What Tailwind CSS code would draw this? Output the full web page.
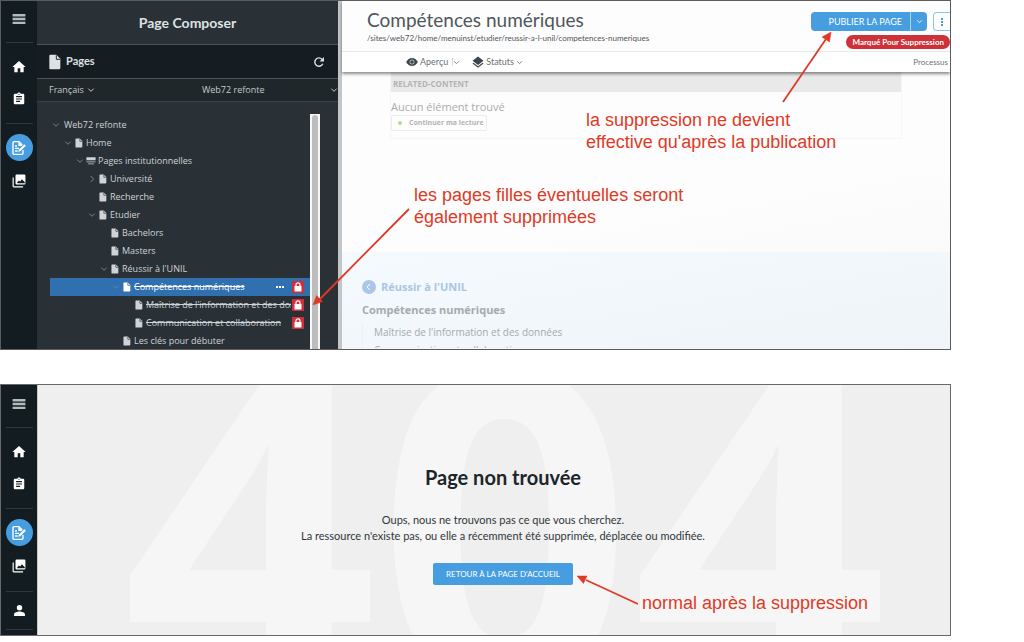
<!DOCTYPE html>
<html lang="fr">
<head>
    <meta charset="UTF-8">
    <meta name="viewport" content="width=device-width, initial-scale=1.0">
    <title>Page Composer</title>
    <script src="https://cdn.jsdelivr.net/npm/@tailwindcss/browser@4"></script>
</head>
<body class="bg-white font-['Lato',sans-serif]">
    <!-- Icons -->
    <svg class="hidden">
        <symbol id="menu" viewBox="0 0 24 24"><path d="M1 3.500h22v4H1zM1 10h22v4H1zM1 16.500h22v4H1z"/></symbol>
        <symbol id="home" viewBox="0 0 24 24"><path d="M10 20v-6h4v6h5v-8h3L12 3 2 12h3v8z"/></symbol>
        <symbol id="clipboard" viewBox="0 0 24 24"><path d="M19 3h-4.180C14.400 1.840 13.300 1 12 1s-2.400.84-2.820 2H5a2 2 0 0 0-2 2v14a2 2 0 0 0 2 2h14a2 2 0 0 0 2-2V5a2 2 0 0 0-2-2zm-7 0a1 1 0 1 1 0 2 1 1 0 0 1 0-2zm2 14H7v-2h7zm3-4H7v-2h10zm0-4H7V7h10z"/></symbol>
        <symbol id="compose" viewBox="0 0 24 24"><path d="M18 15v5a1.500 1.500 0 0 1-1.500 1.500h-12A1.500 1.500 0 0 1 3 20V4a1.500 1.500 0 0 1 1.500-1.500H12L17 7.500" fill="none" stroke="currentColor" stroke-width="2"/><path d="M11 3v6h6zM6 8h3v2H6zM6 11.500h6v2H6zM6 15.500h4v2H6zM11 17.500l.6-3 8.400-8 2.300 2.300-8.300 8.100z"/></symbol>
        <symbol id="images" viewBox="0 0 24 24"><path d="M23 16V3a2 2 0 0 0-2-2H8a2 2 0 0 0-2 2v13a2 2 0 0 0 2 2h13a2 2 0 0 0 2-2zm-14 0v-2l3-3 2 2 3-4 5 5v2zM1 6v15a2 2 0 0 0 2 2h16v-2H3V6z"/></symbol>
        <symbol id="user" viewBox="0 0 24 24"><path d="M12 12a5 5 0 1 0 0-10 5 5 0 0 0 0 10zm0 2c-3.500 0-10 1.700-10 5v3h20v-3c0-3.300-6.500-5-10-5z"/></symbol>
        <symbol id="page" viewBox="0 0 18 24"><path d="M2 1h9l6 6v14a2 2 0 0 1-2 2H2a1.500 1.500 0 0 1-1.500-1.500v-19A1.500 1.500 0 0 1 2 1z"/><path d="M11 2v6h5.500" fill="none" stroke="#293136" stroke-width="1.500"/></symbol>
        <symbol id="section" viewBox="0 0 24 24"><path d="M1 3h22v7H1zM1 13h22v2H1zM5 18h14v2H5z"/></symbol>
        <symbol id="down" viewBox="0 0 12 12"><path d="M2 4l4 4 4-4" fill="none" stroke="currentColor" stroke-width="1.500"/></symbol>
        <symbol id="right" viewBox="0 0 12 12"><path d="M4 1.500L8.500 6 4 10.500" fill="none" stroke="currentColor" stroke-width="1.500"/></symbol>
        <symbol id="lock" viewBox="0 0 12 12"><path d="M2.500 5h7v5.500h-7z"/><path d="M4 5V3.800a2 2 0 0 1 4 0V5" fill="none" stroke="currentColor" stroke-width="1.200"/></symbol>
        <symbol id="reload" viewBox="0 0 24 24"><path d="M19.500 15.500A8.300 8.300 0 1 1 18 6.500" fill="none" stroke="currentColor" stroke-width="2.800"/><path d="M22 2v9h-9z"/></symbol>
        <symbol id="eye" viewBox="0 0 24 24"><path d="M12 4.500C7 4.500 2.700 7.600 1 12c1.700 4.400 6 7.500 11 7.500s9.300-3.100 11-7.500c-1.700-4.400-6-7.500-11-7.500zM12 17a5 5 0 1 1 0-10 5 5 0 0 1 0 10zm0-8a3 3 0 1 0 0 6 3 3 0 0 0 0-6z" stroke="currentColor"/></symbol>
        <symbol id="layers" viewBox="0 0 24 24"><path d="M12 1L1 9.500 12 18l11-8.500zM12 20.500L3 13.500l-2 1.600L12 23.700l11-8.600-2-1.600z"/></symbol>
    </svg>

    <main class="relative flex flex-col gap-[34px] pr-[73px]">
        <!-- Page Composer -->
        <section class="relative flex overflow-hidden border border-[#5c5c5e]">
            <nav class="flex w-9 shrink-0 flex-col items-center bg-[#131c21] text-white">
                <button aria-label="Menu" class="flex h-9 w-full items-center justify-center text-[#b5babd]"><svg class="size-[14px] fill-current"><use href="#menu"/></svg></button>
                <hr class="mt-[5px] w-[27px] border-[#2f383d]">
                <button aria-label="Accueil" class="mt-2 flex h-8 w-full items-center justify-center"><svg class="size-4 fill-current"><use href="#home"/></svg></button>
                <button aria-label="Contenus" class="flex h-8 w-full items-center justify-center"><svg class="size-[14px] fill-current"><use href="#clipboard"/></svg></button>
                <hr class="mt-2 w-[27px] border-[#2f383d]">
                <button aria-label="Page Composer" class="mt-[10px] flex size-[27px] items-center justify-center rounded-full bg-[#469ee0]"><svg class="size-4 fill-current"><use href="#compose"/></svg></button>
                <button aria-label="Médias" class="mt-1 flex h-8 w-full items-center justify-center"><svg class="size-[14px] fill-current"><use href="#images"/></svg></button>
            </nav>

            <aside class="w-[301px] shrink-0 bg-[#293136] text-[#dfe1e2]">
                <h1 class="flex h-11 items-center justify-center border-b border-[#4c5458] text-[14px] font-bold">Page Composer</h1>
                <div class="flex h-[34px] items-center border-b border-[#4c5458] bg-[#151c22] pr-[13px] pl-3">
                    <svg class="h-4 w-3 fill-current"><use href="#page"/></svg>
                    <h2 class="ml-[5px] flex-1 text-[11px] font-bold">Pages</h2>
                    <button aria-label="Actualiser"><svg class="size-3 fill-current"><use href="#reload"/></svg></button>
                </div>
                <div class="flex h-[23px] items-center border-b border-[#394146] bg-[#1f272b] pl-3 font-['Open_Sans',sans-serif] text-[9px] text-[#c6c9cb]">
                    <select aria-label="Langue" class="w-[38px] appearance-none"><option>Français</option></select>
                    <svg class="size-2"><use href="#down"/></svg>
                    <select aria-label="Site" class="ml-[107px] flex-1 appearance-none"><option>Web72 refonte</option></select>
                    <svg class="size-2"><use href="#down"/></svg>
                </div>
                <div class="flex pt-3 pl-[13px]">
                    <ul class="mt-[2px] w-[260px] fill-current font-['Open_Sans',sans-serif] text-[9px] leading-[18px] whitespace-nowrap text-[#d0d3d5]">
                        <li class="flex h-[18px] items-center"><svg class="mr-[2px] size-3 p-[2px] text-[#7d8488]"><use href="#down"/></svg><a href="#">Web72 refonte</a></li>
                        <li class="flex h-[18px] items-center pl-3"><svg class="size-3 p-[2px] text-[#7d8488]"><use href="#down"/></svg><svg class="mr-[2px] h-[10px] w-[10px]"><use href="#page"/></svg><a href="#">Home</a></li>
                        <li class="flex h-[18px] items-center pl-6"><svg class="size-3 p-[2px] text-[#7d8488]"><use href="#down"/></svg><svg class="mr-[2px] h-[10px] w-[10px]"><use href="#section"/></svg><a href="#">Pages institutionnelles</a></li>
                        <li class="flex h-[18px] items-center pl-9"><svg class="size-3 p-[2px] text-[#7d8488]"><use href="#right"/></svg><svg class="mr-[2px] h-[10px] w-[10px]"><use href="#page"/></svg><a href="#">Université</a></li>
                        <li class="flex h-[18px] items-center pl-12"><svg class="mr-[2px] h-[10px] w-[10px]"><use href="#page"/></svg><a href="#">Recherche</a></li>
                        <li class="flex h-[18px] items-center pl-9"><svg class="size-3 p-[2px] text-[#7d8488]"><use href="#down"/></svg><svg class="mr-[2px] h-[10px] w-[10px]"><use href="#page"/></svg><a href="#">Etudier</a></li>
                        <li class="flex h-[18px] items-center pl-15"><svg class="mr-[2px] h-[10px] w-[10px]"><use href="#page"/></svg><a href="#">Bachelors</a></li>
                        <li class="flex h-[18px] items-center pl-15"><svg class="mr-[2px] h-[10px] w-[10px]"><use href="#page"/></svg><a href="#">Masters</a></li>
                        <li class="flex h-[18px] items-center pl-12"><svg class="size-3 p-[2px] text-[#7d8488]"><use href="#down"/></svg><svg class="mr-[2px] h-[10px] w-[10px]"><use href="#page"/></svg><a href="#">Réussir à l'UNIL</a></li>
                        <li class="flex h-[18px] items-center bg-[#3070b0] pr-[6px] pl-15 text-white">
                            <svg class="size-3 p-[2px] text-[#5c86ad]"><use href="#down"/></svg><svg class="mr-[2px] h-[10px] w-[10px]"><use href="#page"/></svg>
                            <a href="#" class="flex-1 line-through">Compétences numériques</a>
                            <button aria-label="Actions" class="mr-2 flex gap-px"><i class="size-[2px] bg-white"></i><i class="size-[2px] bg-white"></i><i class="size-[2px] bg-white"></i></button>
                            <svg class="size-3 bg-[#d02f3a] text-white"><use href="#lock"/></svg>
                        </li>
                        <li class="flex h-[18px] items-center pr-[6px] pl-21">
                            <svg class="mr-[2px] h-[10px] w-[10px] shrink-0"><use href="#page"/></svg>
                            <a href="#" class="mr-px min-w-0 flex-1 overflow-hidden line-through">Maîtrise de l'information et des données</a>
                            <svg class="size-3 shrink-0 bg-[#d02f3a] text-white"><use href="#lock"/></svg>
                        </li>
                        <li class="flex h-[18px] items-center pr-[6px] pl-21">
                            <svg class="mr-[2px] h-[10px] w-[10px]"><use href="#page"/></svg>
                            <a href="#" class="flex-1 line-through">Communication et collaboration</a>
                            <svg class="size-3 bg-[#d02f3a] text-white"><use href="#lock"/></svg>
                        </li>
                        <li class="flex h-[17px] items-center pl-18"><svg class="mr-[2px] h-[10px] w-[10px]"><use href="#page"/></svg><a href="#">Les clés pour débuter</a></li>
                    </ul>
                    <div class="w-[10px] bg-[#f7f7f7] px-[2px] pt-px"><div class="h-full rounded-t-full bg-[#bdbdbd]"></div></div>
                </div>
            </aside>

            <div class="flex min-w-0 flex-1 flex-col border-l-4 border-[#c4c5c6] bg-[#fdfdfd]">
                <header class="relative z-10 bg-[#fdfdfd] shadow-[0_2px_3px_rgba(0,0,0,0.45)]">
                    <div class="flex h-[51px] justify-between border-b border-[#e9e9ea] pl-[25px]">
                        <div class="pt-[7px] text-[#4f565b]">
                            <h2 class="text-[19px] leading-6">Compétences numériques</h2>
                            <p class="text-[8px] leading-3">/sites/web72/home/menuinst/etudier/reussir-a-l-unil/competences-numeriques</p>
                        </div>
                        <div class="flex flex-col items-end pt-[11px]">
                            <div class="flex h-[19px] text-[9px] text-white">
                                <button class="rounded-l-sm bg-[#469ee0] pr-2 pl-[18px]">PUBLIER LA PAGE</button>
                                <button aria-label="Plus d'options" class="flex w-[17px] items-center justify-center rounded-r-sm border-l border-[#a9d2f2] bg-[#469ee0]"><svg class="size-[7px]"><use href="#down"/></svg></button>
                                <button aria-label="Menu de la page" class="ml-[6px] flex w-[17px] flex-col items-center justify-center gap-px rounded-l-sm border border-r-0 border-[#8cc3ef]"><i class="size-[2px] bg-[#469ee0]"></i><i class="size-[2px] bg-[#469ee0]"></i><i class="size-[2px] bg-[#469ee0]"></i></button>
                            </div>
                            <span class="mt-1 h-[14px] rounded-full bg-[#ce3138] px-[6px] text-[8px] leading-[14px] font-bold text-white">Marqué Pour Suppression</span>
                        </div>
                    </div>
                    <div class="flex h-5 items-center bg-white pl-16 text-[9px] text-[#6b7276]">
                        <svg class="size-3 fill-current text-[#3b4449]"><use href="#eye"/></svg>
                        <button class="ml-[2px]">Aperçu</button>
                        <span class="ml-1 h-2 border-l border-[#d8dadb]"></span>
                        <svg class="size-[7px]"><use href="#down"/></svg>
                        <svg class="ml-3 size-3 fill-current text-[#3b4449]"><use href="#layers"/></svg>
                        <button class="ml-[2px]">Statuts</button>
                        <svg class="ml-[2px] size-[7px]"><use href="#down"/></svg>
                        <button class="mr-[2px] ml-auto text-[8px]">Processus</button>
                    </div>
                </header>

                <div class="flex flex-1 flex-col font-['Open_Sans',sans-serif]">
                    <div class="mr-12 ml-12 h-[67px] border border-t-0 border-[#f6f6f6]">
                        <h3 class="h-5 bg-[#e9e9e9] pt-[6px] pl-[2px] text-[8px] leading-3 font-bold text-[#b4b4b4]">RELATED-CONTENT</h3>
                        <p class="mt-2 text-[11px] leading-[14px] text-[#a9adaf]">Aucun élément trouvé</p>
                        <button class="mt-[1px] flex h-4 items-center rounded-xs border border-[#ededed] pr-[2px] pl-[6px] text-[7px] font-bold text-[#b3b3b3]"><i class="mr-[7px] size-1 rounded-full bg-[#a9df92]"></i>Continuer ma lecture</button>
                    </div>
                    <div class="h-[113px] bg-linear-to-br from-[#fdfdfd] from-60% to-[#fafafa]"></div>
                    <div class="flex-1 bg-linear-to-br from-[#f4fafe] to-[#eff4f8] pt-[27px] pl-[20px] text-[#a5aaae]">
                        <a href="#" class="flex h-4 items-center gap-[5px] text-[11px] font-bold text-[#a9c7e4]"><svg class="size-[14px] rounded-full bg-[#abc7e5] p-[4px] text-white"><path d="M4 0L1 3L4 6" fill="none" stroke="currentColor"/></svg>Réussir à l'UNIL</a>
                        <h3 class="mt-[7px] text-[11px] leading-4 font-bold">Compétences numériques</h3>
                        <ul class="mt-[6px] border-l border-[#eaf1f5] pl-[11px] text-[10px] leading-4">
                            <li>Maîtrise de l'information et des données</li>
                            <li class="mt-1 h-1 overflow-hidden leading-3">Communication et collaboration</li>
                        </ul>
                    </div>
                </div>
            </div>
        </section>

        <!-- 404 -->
        <section class="relative flex overflow-hidden border border-[#69696b]">
            <nav class="flex w-9 shrink-0 flex-col items-center bg-[#131c21] pt-px pb-[5px] text-white">
                <button aria-label="Menu" class="flex h-9 w-full items-center justify-center text-[#b5babd]"><svg class="size-[14px] fill-current"><use href="#menu"/></svg></button>
                <hr class="mt-[5px] w-[27px] border-[#2f383d]">
                <button aria-label="Accueil" class="mt-2 flex h-8 w-full items-center justify-center"><svg class="size-4 fill-current"><use href="#home"/></svg></button>
                <button aria-label="Contenus" class="flex h-8 w-full items-center justify-center"><svg class="size-[14px] fill-current"><use href="#clipboard"/></svg></button>
                <hr class="mt-2 w-[27px] border-[#2f383d]">
                <button aria-label="Page Composer" class="mt-[10px] flex size-[27px] items-center justify-center rounded-full bg-[#469ee0]"><svg class="size-4 fill-current"><use href="#compose"/></svg></button>
                <button aria-label="Médias" class="mt-1 flex h-8 w-full items-center justify-center"><svg class="size-[14px] fill-current"><use href="#images"/></svg></button>
                <hr class="mt-[9px] w-[27px] border-[#2f383d]">
                <button aria-label="Profil" class="mt-[2px] flex h-8 w-full items-center justify-center"><svg class="size-[13px] fill-current"><use href="#user"/></svg></button>
                <hr class="mt-[3px] w-[27px] border-[#2f383d]">
            </nav>
            <div class="relative flex min-w-0 flex-1 flex-col items-center overflow-hidden border-l border-[#c8c8c8] bg-[#efefef] pt-[80px] pl-[18px] text-center text-[#1c2529]">
                <div aria-hidden="true" class="absolute top-[-170px] right-0 left-[22px] text-center font-['Open_Sans',sans-serif] text-[446px] leading-[600px] font-bold text-[#f6f6f6]">404</div>
                <h2 class="relative text-[20px] leading-6 font-bold">Page non trouvée</h2>
                <p class="relative mt-[23px] text-[11px] leading-4 text-[#2f373b]">Oups, nous ne trouvons pas ce que vous cherchez.<br>La ressource n'existe pas, ou elle a récemment été supprimée, déplacée ou modifiée.</p>
                <a href="#" class="relative mt-[19px] flex h-[22px] items-center rounded-xs bg-[#469ee0] px-[13px] text-[8px] text-white">RETOUR À LA PAGE D'ACCUEIL</a>
            </div>
        </section>

        <!-- Annotations -->
        <div class="pointer-events-none absolute inset-0 z-20 font-['Liberation_Sans',sans-serif] text-[18px] leading-[22px] text-[#e03a26]">
            <svg class="absolute top-0 left-0 h-[642px] w-[951px] fill-current stroke-current">
                <path d="M783 102L826 39M409 209L319 300M638 604L586 580" stroke-width="1.800"/>
                <path d="M831 32L829.500 42L822 37ZM313 305L316.500 295.500L322.500 301.500ZM577 576L587 576L583.500 583.500Z" stroke-width="0.500"/>
            </svg>
            <p class="absolute top-[109px] left-[586px]">la suppression ne devient<br>effective qu'après la publication</p>
            <p class="absolute top-[184px] left-[414px]">les pages filles éventuelles seront<br>également supprimées</p>
            <p class="absolute top-[592px] left-[642px]">normal après la suppression</p>
        </div>
    </main>
</body>
</html>
